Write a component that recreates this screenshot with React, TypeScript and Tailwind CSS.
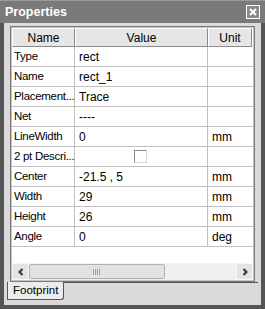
import React from "react";

const rows: [string, string, string][] = [
  ["Type", "rect", ""],
  ["Name", "rect_1", ""],
  ["Placement...", "Trace", ""],
  ["Net", "----", ""],
  ["LineWidth", "0", "mm"],
  ["2 pt Descri...", "__CHECK__", ""],
  ["Center", "-21.5 , 5", "mm"],
  ["Width", "29", "mm"],
  ["Height", "26", "mm"],
  ["Angle", "0", "deg"],
];

export default function App() {
  return (
    <div
      className="w-[265px] h-[309px] bg-[#555555] flex flex-col text-black"
      style={{ fontFamily: "'Liberation Sans', Arial, sans-serif" }}
    >
      {/* Title bar */}
      <div className="h-[23px] flex items-center justify-between pl-[5px] pr-[5px] bg-[#7a7a7a] border-t border-[#9a9a9a]">
        <span className="text-white font-bold text-[12.5px] leading-none">Properties</span>
        <div className="w-[14px] h-[14px] border border-white bg-[#8a8a8a] flex items-center justify-center">
          <svg width="10" height="10" viewBox="0 0 10 10">
            <path d="M2 2 L8 8 M8 2 L2 8" stroke="white" strokeWidth="2" />
          </svg>
        </div>
      </div>
      {/* Body */}
      <div className="flex-1 mx-[4px] mb-[4px] bg-[#dadada] flex flex-col pt-[3px] px-[6px]">
        <div className="h-[256px] border border-[#7a7a7a] bg-white flex flex-col">
          <div className="flex-1 border border-[#c4c4c4] flex flex-col">
            {/* header */}
            <div className="flex h-[19px] text-[12px] leading-none">
              <div className="w-[63px] flex items-center justify-center bg-[#e6e6e6] border-t border-l border-white border-r border-b border-r-[#8a8a8a] border-b-[#8a8a8a]">Name</div>
              <div className="w-[133px] flex items-center justify-center bg-[#e6e6e6] border-t border-l border-white border-r border-b border-r-[#8a8a8a] border-b-[#8a8a8a]">Value</div>
              <div className="w-[44px] flex items-center justify-center bg-[#e6e6e6] border-t border-l border-white border-r border-b border-r-[#8a8a8a] border-b-[#8a8a8a]">Unit</div>
            </div>
            {rows.map(([n, v, u], i) => (
              <div key={i} className="flex h-[20px] text-[12px] leading-none border-b border-[#c0c0c0]">
                <div className="w-[63px] flex items-center pl-[2px] border-r border-[#c0c0c0] whitespace-nowrap overflow-hidden text-[11.5px] tracking-[-0.3px]">{n}</div>
                <div className="w-[133px] flex items-center pl-[4px] border-r border-[#c0c0c0] whitespace-nowrap">
                  {v === "__CHECK__" ? (
                    <div className="ml-[55px] w-[13px] h-[13px] border border-t-[#8a8a8a] border-l-[#8a8a8a] border-r-[#d8d8d8] border-b-[#d8d8d8] bg-white" />
                  ) : (
                    v
                  )}
                </div>
                <div className="w-[44px] flex items-center pl-[4px]">{u}</div>
              </div>
            ))}
            <div className="flex-1" />
            {/* horizontal scrollbar */}
            <div className="h-[17px] flex bg-[#f0f0f0] items-stretch">
              <div className="w-[17px] flex items-center justify-center bg-[#e4e4e4] border border-[#f8f8f8]">
                <svg width="8" height="8" viewBox="0 0 8 8"><path d="M5.5 1 L2.5 4 L5.5 7" stroke="#333" strokeWidth="2" fill="none" /></svg>
              </div>
              <div className="w-[136px] my-[1px] rounded-[2px] border border-[#b0b0b0] bg-[#e2e2e2] flex items-center justify-center">
                <svg width="8" height="6" viewBox="0 0 8 6">
                  <path d="M0.5 0 V6 M2.5 0 V6 M4.5 0 V6 M6.5 0 V6" stroke="#a0a0a0" strokeWidth="1" />
                </svg>
              </div>
              <div className="flex-1" />
              <div className="w-[17px] flex items-center justify-center bg-[#e4e4e4] border border-[#f8f8f8]">
                <svg width="8" height="8" viewBox="0 0 8 8"><path d="M2.5 1 L5.5 4 L2.5 7" stroke="#333" strokeWidth="2" fill="none" /></svg>
              </div>
            </div>
          </div>
        </div>
        {/* tabs */}
        <div className="flex border-t border-[#555] -mx-[3px]">
          <div className="h-[18px] px-[5px] bg-[#ececec] border-l border-b border-r border-[#555] rounded-br-[3px] text-[11.5px] leading-none flex items-center -mt-[1px]">Footprint</div>
        </div>
      </div>
    </div>
  );
}
